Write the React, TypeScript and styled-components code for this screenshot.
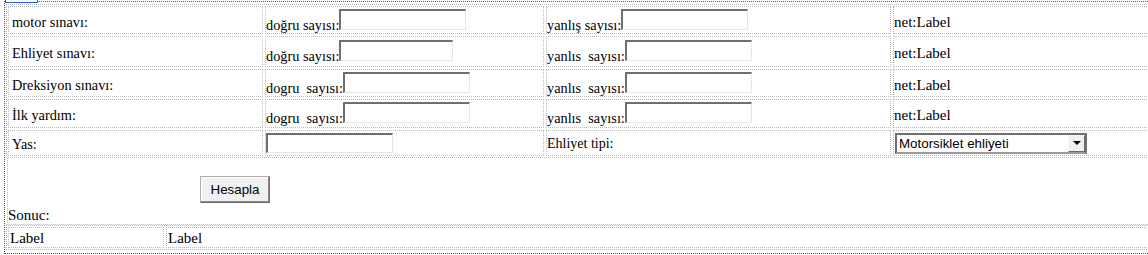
import React from 'react';
import styled, { createGlobalStyle } from 'styled-components';

const GlobalStyle = createGlobalStyle`
  html, body {
    margin: 0;
    padding: 0;
    background: #fff;
    overflow: hidden;
  }
  body {
    font-family: 'Liberation Serif', 'Times New Roman', serif;
    color: #000;
  }
`;

const Frame = styled.form`
  position: relative;
  width: 1190px;
  margin: 1px 0 0 4px;
  padding: 2px 0 3px 1px;
  border: 1px dotted #2c5fc0;
  border-right: none;
`;

// bottom edge of the designer's "form#form1" tag
const TagBadge = styled.span`
  position: absolute;
  left: 0;
  top: -11px;
  width: 33px;
  height: 12px;
  box-sizing: border-box;
  border: 1px solid #2c5fc0;
  background: #fff;
`;

const GridTable = styled.table<{ $w: number }>`
  border-collapse: separate;
  border-spacing: 2px;
  table-layout: fixed;
  width: ${p => p.$w}px;
  outline: 1px dotted #b9b9b9;
  outline-offset: -1px;
`;

const Col = styled.col<{ $w: number }>`
  width: ${p => p.$w}px;
`;

const Row = styled.tr<{ $h: number }>`
  height: ${p => p.$h}px;
`;

const Cell = styled.td<{ $pad?: number; $size?: number; $top?: number }>`
  box-sizing: border-box;
  border: 1px dotted #b9b9b9;
  padding: ${p => p.$top ?? 0}px 0 0 ${p => p.$pad ?? 0}px;
  font-size: ${p => p.$size ?? 14.3}px;
  line-height: 16px;
  white-space: nowrap;
  vertical-align: middle;
  overflow: hidden;
`;

// caption + textbox; caption baseline sits on the bottom of the box
const ScoreField = styled.span`
  display: flex;
  align-items: flex-end;
  padding-bottom: 2px;
`;

const FieldCaption = styled.span`
  line-height: 14px;
  margin-bottom: -2px;
`;

const TextBox = styled.input<{ $w?: number; $h?: number }>`
  display: block;
  box-sizing: border-box;
  width: ${p => p.$w ?? 127}px;
  height: ${p => p.$h ?? 21}px;
  margin: 0;
  padding: 1px 2px;
  border-style: solid;
  border-width: 2px 1px 1px 2px;
  border-color: #6f6f6f #e6e6e6 #e6e6e6 #6f6f6f;
  background: #fff;
  font: 13.33px 'Liberation Sans', Arial, sans-serif;
  outline: none;
`;

const Dropdown = styled.span`
  display: flex;
  align-items: center;
  box-sizing: border-box;
  width: 192px;
  height: 21px;
  margin-left: 1px;
  border: 2px solid #707070;
  border-bottom-color: #9a9a9a;
  background: #fff;
`;

const NativeSelect = styled.select`
  appearance: none;
  flex: 1;
  height: 100%;
  margin: 0;
  padding: 0 0 0 2px;
  border: 0;
  background: transparent;
  font: 13.33px 'Liberation Sans', Arial, sans-serif;
  color: #000;
  outline: none;
`;

const ArrowBox = styled.span`
  display: flex;
  align-items: center;
  justify-content: center;
  box-sizing: border-box;
  width: 17px;
  height: 17px;
  background: #f0f0f0;
  border: 1px solid;
  border-color: #f8f8f8 #6a6a6a #6a6a6a #f8f8f8;

  &::after {
    content: '';
    border-left: 4px solid transparent;
    border-right: 4px solid transparent;
    border-top: 4px solid #000;
  }
`;

const ActionBlock = styled.div`
  display: flex;
  flex-direction: column;
  align-items: flex-start;
  width: 1178px;
  margin-left: 1px;
  padding-top: 18px;
  border: 1px dotted #b9b9b9;
  border-top: none;
  border-right: none;
`;

const CalcButton = styled.button`
  box-sizing: border-box;
  width: 70px;
  height: 27px;
  margin: 0 0 0 192px;
  padding: 0;
  background: #f0f0f0;
  border: 1px solid;
  border-color: #acacac #6b6b6b #6b6b6b #acacac;
  box-shadow: inset -1px -1px 0 #8c8c8c, inset 1px 1px 0 #fff;
  font: 13.33px 'Liberation Sans', Arial, sans-serif;
  color: #000;
`;

const ResultCaption = styled.span`
  margin-top: 4px;
  font-size: 15px;
  line-height: 17px;
`;

const scoreRows = [
  { exam: 'motor sınavı:', right: 'doğru sayısı:', rightW: 127, wrong: 'yanlış sayısı:', h: 28 },
  { exam: 'Ehliyet sınavı:', right: 'doğru sayısı:', rightW: 114, wrong: 'yanlıs\u00a0 sayısı:', h: 31 },
  { exam: 'Dreksiyon sınavı:', right: 'dogru\u00a0 sayısı:', rightW: 127, wrong: 'yanlıs\u00a0 sayısı:', h: 28 },
  { exam: 'İlk yardım:', right: 'dogru\u00a0 sayısı:', rightW: 127, wrong: 'yanlıs\u00a0 sayısı:', h: 29 },
];

const App: React.FC = () => {
  return (
    <>
      <GlobalStyle />
      <Frame onSubmit={e => e.preventDefault()}>
        <TagBadge />
        <GridTable $w={1179}>
          <colgroup>
            <Col $w={255} />
            <Col $w={279} />
            <Col $w={345} />
            <Col $w={290} />
          </colgroup>
          <tbody>
            {scoreRows.map(r => (
              <Row key={r.exam} $h={r.h}>
                <Cell $pad={3} $top={3}>{r.exam}</Cell>
                <Cell>
                  <ScoreField>
                    <FieldCaption>{r.right}</FieldCaption>
                    <TextBox $w={r.rightW} />
                  </ScoreField>
                </Cell>
                <Cell>
                  <ScoreField>
                    <FieldCaption>{r.wrong}</FieldCaption>
                    <TextBox />
                  </ScoreField>
                </Cell>
                <Cell $size={15} $top={3}>net:Label</Cell>
              </Row>
            ))}
            <Row $h={26}>
              <Cell $pad={3} $top={1}>Yas:</Cell>
              <Cell>
                <TextBox $h={20} />
              </Cell>
              <Cell $size={14} $top={1}>Ehliyet tipi:</Cell>
              <Cell>
                <Dropdown>
                  <NativeSelect defaultValue="motor">
                    <option value="motor">Motorsiklet ehliyeti</option>
                    <option value="otomobil">Otomobil ehliyeti</option>
                  </NativeSelect>
                  <ArrowBox />
                </Dropdown>
              </Cell>
            </Row>
          </tbody>
        </GridTable>

        <ActionBlock>
          <CalcButton type="button">Hesapla</CalcButton>
          <ResultCaption>Sonuc:</ResultCaption>
        </ActionBlock>

        <GridTable $w={1179}>
          <colgroup>
            <Col $w={156} />
            <Col $w={1017} />
          </colgroup>
          <tbody>
            <Row $h={21}>
              <Cell $pad={1} $size={15}>Label</Cell>
              <Cell $pad={1} $size={15}>Label</Cell>
            </Row>
          </tbody>
        </GridTable>
      </Frame>
    </>
  );
};

export default App;
